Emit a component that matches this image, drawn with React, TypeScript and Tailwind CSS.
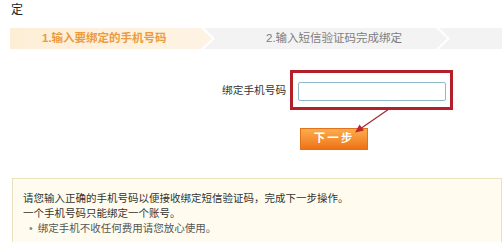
import React from 'react';

const FONT = '[font-family:"Liberation_Sans","Noto_Sans_CJK_SC",sans-serif]';

/**
 * One chevron step: white outline arrow holding a coloured arrow
 */
const Step: React.FC<{
  width: number;
  className: string;
  children: React.ReactNode;
}> = ({ width, className, children }) => (
  <div
    className="h-full bg-white [clip-path:polygon(0_0,calc(100%-11px)_0,100%_50%,calc(100%-11px)_100%,0_100%)]"
    style={{ width }}
  >
    <div
      className={`h-full flex items-center [clip-path:polygon(0_0,calc(100%-11px)_0,100%_50%,calc(100%-11px)_100%,0_100%)] ${className}`}
      style={{ width: width - 3 }}
    >
      {children}
    </div>
  </div>
);

export default function App() {
  return (
    <div className={`relative w-[502px] h-[242px] overflow-hidden bg-white text-[#333] ${FONT}`}>
      {/* Page title remnant */}
      <div className="pl-[11px] pt-[3px] h-[20px] text-[12px] leading-[14px] text-[#222]">定</div>

      {/* Step bar */}
      <div className="mt-[8px] ml-[10px] h-[21px] flex bg-[#f3f3f3]">
        <Step width={205} className="bg-gradient-to-r from-[#fdeed6] to-[#fef3e4] pl-[32px]">
          <span className="text-[11.5px] font-bold text-[#eb9b3e] leading-none">1.输入要绑定的手机号码</span>
        </Step>
        <Step width={235} className="bg-[#f3f3f3] pl-[51px]">
          <span className="text-[11.5px] text-[#7d7d7d] leading-none">2.输入短信验证码完成绑定</span>
        </Step>
      </div>

      {/* Phone number row */}
      <div className="mt-[21px] flex items-center pl-[222px] gap-[4px]">
        <span className="text-[10.7px] text-[#333] leading-none">绑定手机号码</span>
        <div className="w-[163px] h-[40px] border-[3px] border-[#b3202c] pl-[5px] pt-[9px]">
          <input
            type="text"
            className="block w-[148px] h-[19px] border border-[#8fb8c9] rounded-[2px] bg-white outline-none"
          />
        </div>
      </div>

      {/* Next button */}
      <div className="mt-[18px] pl-[300px]">
        <button className="w-[68px] h-[22px] flex items-center justify-center bg-gradient-to-b from-[#fbac4c] to-[#ef7212] border border-[#e0731c] text-white text-[11.5px] font-bold tracking-[2px] leading-none">
          下一步
        </button>
      </div>

      {/* Notice box */}
      <div className="mt-[28px] ml-[12px] h-[80px] border border-[#e9e2bf] bg-[#fffcef] pl-[10px] pt-[12px] text-[10.5px] leading-[15px] text-[#333]">
        <p>请您输入正确的手机号码以便接收绑定短信验证码，完成下一步操作。</p>
        <p>一个手机号码只能绑定一个账号。</p>
        <p className="pl-[6px] text-[#555]">
          <span className="mr-[5px] text-[#888]">•</span>绑定手机不收任何费用请您放心使用。
        </p>
      </div>

      {/* Annotation arrow over the form */}
      <svg className="absolute left-[350px] top-[106px]" width="44" height="32" viewBox="0 0 44 32">
        <line x1="39" y1="3" x2="10" y2="23" stroke="#a3262e" strokeWidth="1.2" />
        <polygon points="5,26.5 9.5,18.5 14,24.5" fill="#c0242c" />
      </svg>
    </div>
  );
}
